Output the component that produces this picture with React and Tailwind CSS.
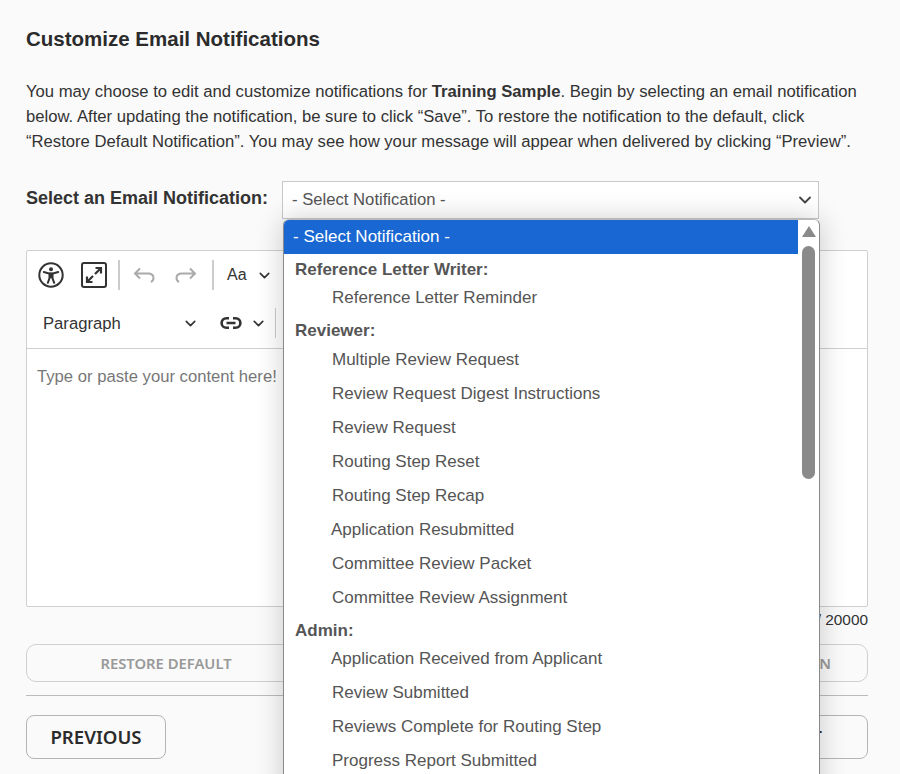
import { ChevronDown } from "lucide-react";

const groups = [
  { label: "Reference Letter Writer:", h: "h-[27px] pb-[1px]", items: [["Reference Letter Reminder", "pl-[48px]"]] },
  {
    label: "Reviewer:",
    h: "h-[28px] pb-[2px]",
    items: [
      ["Multiple Review Request", "pl-[48px]"],
      ["Review Request Digest Instructions", "pl-[48px]"],
      ["Review Request", "pl-[48px]"],
      ["Routing Step Reset", "pl-[48px]"],
      ["Routing Step Recap", "pl-[48px]"],
      ["Application Resubmitted", "pl-[47px]"],
      ["Committee Review Packet", "pl-[48px]"],
      ["Committee Review Assignment", "pl-[48px]"],
    ],
  },
  {
    label: "Admin:",
    h: "h-[27px] pb-[1px]",
    items: [
      ["Application Received from Applicant", "pl-[47px]"],
      ["Review Submitted", "pl-[48px]"],
      ["Reviews Complete for Routing Step", "pl-[48px]"],
      ["Progress Report Submitted", "pl-[48px]"],
    ],
  },
];

function AccessibilityIcon() {
  return (
    <svg width="26" height="26" viewBox="0 0 26 26" fill="none" stroke="#333" strokeWidth="2">
      <circle cx="13" cy="13" r="11.7" />
      <circle cx="13" cy="7.2" r="2" fill="#333" stroke="none" />
      <path d="M5.8 10 L11 11.5 H15 L20.2 10" strokeLinecap="round" />
      <path d="M12 11.5 V15 L9.8 20.8 M14 11.5 V15 L16.2 20.8 M11.5 12 H14.5 V15 H11.5 Z" strokeLinecap="round" fill="#333" />
    </svg>
  );
}

function ExpandIcon() {
  return (
    <svg width="26" height="26" viewBox="0 0 26 26" fill="none" stroke="#333" strokeWidth="2">
      <rect x="1" y="1" width="24" height="24" rx="2" />
      <path d="M14 12 L19.5 6.5 M14.5 6 H20 V11.5 M12 14 L6.5 19.5 M6 14.5 V20 H11.5" strokeWidth="2.2" />
    </svg>
  );
}

function UndoIcon({ flip }) {
  return (
    <svg width="22" height="16" viewBox="0 0 22 16" fill="none" stroke="#aaa" strokeWidth="2" className={flip ? "-scale-x-100" : ""}>
      <path d="M7 1.5 L2 6.5 L7 11.5 M2 6.5 H15 C18.5 6.5 20.5 8.5 20.5 11 C20.5 12.8 19.5 14.2 18 15" />
    </svg>
  );
}

function LinkIcon() {
  return (
    <svg width="24" height="14" viewBox="0 0 24 14" fill="none" stroke="#333" strokeWidth="2.6">
      <path d="M10 2.2 H7.5 C4.5 2.2 2.6 4.3 2.6 7 C2.6 9.7 4.5 11.8 7.5 11.8 H10 M14 2.2 H16.5 C19.5 2.2 21.4 4.3 21.4 7 C21.4 9.7 19.5 11.8 16.5 11.8 H14 M7.5 7 H16.5" />
    </svg>
  );
}

function Dropdown() {
  return (
    <div className="absolute left-[283px] top-[219px] w-[537px] h-[640px] bg-white border border-[#8a8a8a] border-t-[#bbb] rounded-t-[6px] shadow-[0_0_28px_rgba(0,0,0,0.2)] overflow-hidden text-[#555] text-[17px]">
      <div className="h-[34px] w-[514px] bg-[#1967d2] text-white pl-[9px] flex items-center">- Select Notification -</div>
      {groups.map((group) => (
        <div key={group.label}>
          <div className={`${group.h} pl-[11px] flex items-end font-bold leading-[20px]`}>{group.label}</div>
          {group.items.map(([name, indent]) => (
            <div key={name} className={`h-[34px] flex items-center ${indent}`}>
              {name}
            </div>
          ))}
        </div>
      ))}
      <div className="absolute right-[4px] top-[6px] w-[13px] flex flex-col items-center">
        <div className="w-0 h-0 border-l-[7px] border-r-[7px] border-b-[11px] border-l-transparent border-r-transparent border-b-[#8a8a8a]" />
        <div className="mt-[9px] w-[13px] h-[233px] rounded-full bg-[#8a8a8a]" />
      </div>
    </div>
  );
}

export default function App() {
  return (
    <div className="relative h-[774px] w-[900px] overflow-hidden bg-[#fafafa] pl-[26px] pr-[32px] text-[16.66px] text-[#333] font-['Liberation_Sans',Arial,sans-serif]">
      <h1 className="pt-[26px] text-[20.5px] leading-[26px] font-bold text-[#2b2b2b]">Customize Email Notifications</h1>
      <p className="mt-[27px] leading-[25px]">
        You may choose to edit and customize notifications for <b>Training Sample</b>. Begin by selecting an email notification below. After updating the notification, be sure to click “Save”. To restore the notification to the default, click “Restore Default Notification”. You may see how your message will appear when delivered by clicking “Preview”.
      </p>

      <div className="mt-[27px] flex items-center h-[38px]">
        <label className="w-[256px] text-[18px] font-bold text-[#333] -translate-y-[2px]">Select an Email Notification:</label>
        <div className="w-[537px] h-[38px] border border-[#c8c8c8] bg-white flex items-center justify-between pl-[9px] pr-[3px] text-[#555]">
          <span>- Select Notification -</span>
          <ChevronDown size={20} strokeWidth={2.2} className="text-[#444]" />
        </div>
      </div>

      <div className="mt-[31px] h-[357px] border border-[#cfcfcf] rounded-[2px] bg-white flex flex-col">
        <div className="h-[98px] border-b border-[#cfcfcf] shrink-0">
          <div className="h-[48px] flex items-center pl-[11px]">
            <AccessibilityIcon />
            <span className="ml-[17px]"><ExpandIcon /></span>
            <span className="ml-[11px] h-[30px] w-[2px] bg-[#ccc]" />
            <span className="ml-[13px]"><UndoIcon /></span>
            <span className="ml-[20px]"><UndoIcon flip /></span>
            <span className="ml-[15px] h-[30px] w-[2px] bg-[#ccc]" />
            <span className="ml-[13px] text-[16px]">Aa</span>
            <ChevronDown size={17} strokeWidth={2.3} className="ml-[9px]" />
          </div>
          <div className="h-[48px] flex items-center pl-[16px]">
            <span className="w-[139px] translate-y-[1px]">Paragraph</span>
            <ChevronDown size={17} strokeWidth={2.3} />
            <span className="ml-[20px]"><LinkIcon /></span>
            <ChevronDown size={17} strokeWidth={2.3} className="ml-[7px]" />
            <span className="ml-[8px] h-[30px] w-px bg-[#ccc]" />
          </div>
        </div>
        <div className="pl-[10px] pt-[18px] text-[#777] leading-[20px]">Type or paste your content here!</div>
      </div>

      <div className="mt-[4px] text-right text-[15.4px] leading-[18px]">0 / 20000</div>

      <div className="mt-[15px] flex gap-[10px] font-['Noto_Sans',sans-serif] text-[14.8px] font-semibold text-[#999]">
        <button className="w-[280px] h-[38px] border border-[#cfcfcf] rounded-[10px]">RESTORE DEFAULT</button>
        <button className="flex-1 h-[38px] border border-[#cfcfcf] rounded-[10px]">SAVE</button>
        <button className="w-[248px] h-[38px] border border-[#cfcfcf] rounded-[10px]">PREVIEW NOTIFICATION</button>
      </div>

      <div className="mt-[13px] h-px bg-[#bbb]" />

      <div className="mt-[19px] flex justify-between font-['Noto_Sans',sans-serif] text-[18.6px] font-semibold text-[#2b2b2b]">
        <button className="w-[140px] h-[44px] border border-[#b5b5b5] rounded-[8px]">PREVIOUS</button>
        <button className="w-[140px] h-[44px] border border-[#b5b5b5] rounded-[8px]">NEXT</button>
      </div>

      <Dropdown />
    </div>
  );
}
